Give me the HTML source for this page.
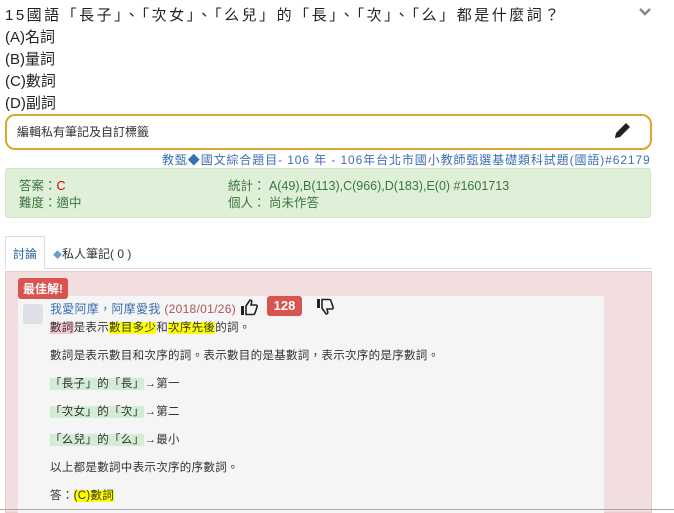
<!DOCTYPE html>
<html><head><meta charset="utf-8"><style>
body{margin:0;width:674px;height:513px;overflow:hidden;background:#fff;font-family:"Liberation Sans","Noto Sans CJK TC",sans-serif;color:#333;position:relative}
.a{position:absolute}
.q{left:5px;top:5px;font-size:15px;line-height:22px;color:#222}
.note{left:5px;top:114px;width:647px;height:36px;border:2px solid #d9a534;border-radius:10px;box-sizing:border-box;font-size:12px;line-height:32px;padding-left:10px}
.src{left:162px;top:151px;font-size:12px;color:#3a6fb0;letter-spacing:0.9px;white-space:nowrap}
.info{left:5px;top:168px;width:646px;height:50px;background:#dff0d8;border:1px solid #d0e6c6;border-radius:3px;box-sizing:border-box;font-size:12.5px;color:#3c763d;line-height:17px}
.tabs{left:5px;top:236px;font-size:12px}
.pink{left:5px;top:271px;width:647px;height:242px;background:#f2dede;border:1px solid #ebcccc;box-sizing:border-box}
.gray{left:18px;top:296px;width:586px;height:217px;background:#f5f5f5}
.c{font-size:11.5px;color:#333;left:50px;letter-spacing:0.3px}
.g{background:#d4ecd4}
.y{background:#ff0}
</style></head><body>
<div class="a q"><span style="letter-spacing:2.5px">15國語「長子」、「次女」、「么兒」的「長」、「次」、「么」都是什麼詞？</span><br>(A)名詞<br>(B)量詞<br>(C)數詞<br>(D)副詞</div>
<svg class="a" style="left:639px;top:8px" width="12" height="8" viewBox="0 0 12 8"><path d="M1 1l5 5 5-5" stroke="#888" stroke-width="2.5" fill="none"/></svg>
<div class="a note">編輯私有筆記及自訂標籤</div>
<svg class="a" style="left:612px;top:121px" width="20" height="20" viewBox="0 0 20 20"><path d="M3 17l1-5L14 2l4 4L8 16z" fill="#222"/><path d="M3 17l4-1-3-3z" fill="#222"/></svg>
<div class="a src">教甄◆國文綜合題目- 106 年 - 106年台北市國小教師甄選基礎類科試題(國語)#62179</div>
<div class="a info"><div class="a" style="left:13px;top:9px">答案：<span style="color:#d00">C</span><br>難度：適中</div><div class="a" style="left:222px;top:9px">統計： A(49),B(113),C(966),D(183),E(0) #1601713<br>個人： 尚未作答</div></div>
<div class="a" style="left:5px;top:236px;width:40px;height:33px;border:1px solid #ddd;border-bottom:none;background:#fff;box-sizing:border-box"></div>
<div class="a" style="left:45px;top:268px;width:607px;border-top:1px solid #ddd"></div>
<div class="a tabs" style="left:13px;top:245px;color:#2a6496">討論</div>
<div class="a tabs" style="left:53px;top:245px;color:#333"><span style="color:#6a9ad8;font-size:9px">◆</span>私人筆記( 0 )</div>
<div class="a pink"></div>
<div class="a gray"></div>
<div class="a" style="left:18px;top:278px;background:#d9534f;color:#fff;font-size:12px;font-weight:bold;padding:2px 5px;border-radius:3px">最佳解!</div>
<div class="a" style="left:23px;top:304px;width:20px;height:20px;background:#dde0e6;border-radius:3px"></div>
<div class="a c" style="top:300px;font-size:12px"><span style="color:#3a6fb0">我愛阿摩，阿摩愛我</span> <span style="color:#a55">(2018/01/26)</span></div>
<svg class="a" style="left:240px;top:298px" width="18" height="18" viewBox="0 0 18 18"><rect x="1" y="8" width="3" height="9" fill="#222"/><path d="M6 8l4-6c1.5 0 2 1 1.6 2.5L11 7h5c1 0 1.5 1 1 2l-2 6c-.3 1-1 1.5-2 1.5H6z" fill="none" stroke="#222" stroke-width="1.6"/></svg>
<div class="a" style="left:267px;top:296px;width:35px;height:20px;background:#d9534f;color:#fff;border-radius:3px;font-size:13px;font-weight:bold;text-align:center;line-height:20px">128</div>
<svg class="a" style="left:316px;top:298px" width="18" height="18" viewBox="0 0 18 18"><rect x="1" y="1" width="3" height="9" fill="#222"/><path d="M6 10l4 6c1.5 0 2-1 1.6-2.5L11 11h5c1 0 1.5-1 1-2l-2-6c-.3-1-1-1.5-2-1.5H6z" fill="none" stroke="#222" stroke-width="1.6"/></svg>
<div class="a c" style="top:319px"><span style="background:#f5c6cb">數詞</span>是表示<span class="y">數目多少</span>和<span class="y">次序先後</span>的詞。</div>
<div class="a c" style="top:347px">數詞是表示數目和次序的詞。表示數目的是基數詞，表示次序的是序數詞。</div>
<div class="a c" style="top:375px"><span class="g">「長子」的「長」</span>→第一</div>
<div class="a c" style="top:403px"><span class="g">「次女」的「次」</span>→第二</div>
<div class="a c" style="top:431px"><span class="g">「么兒」的「么」</span>→最小</div>
<div class="a c" style="top:459px">以上都是數詞中表示次序的序數詞。</div>
<div class="a c" style="top:487px">答：<span class="y">(C)數詞</span></div>
<div class="a" style="left:0;top:509px;width:674px;border-top:1px solid #aaa"></div>
</body></html>
